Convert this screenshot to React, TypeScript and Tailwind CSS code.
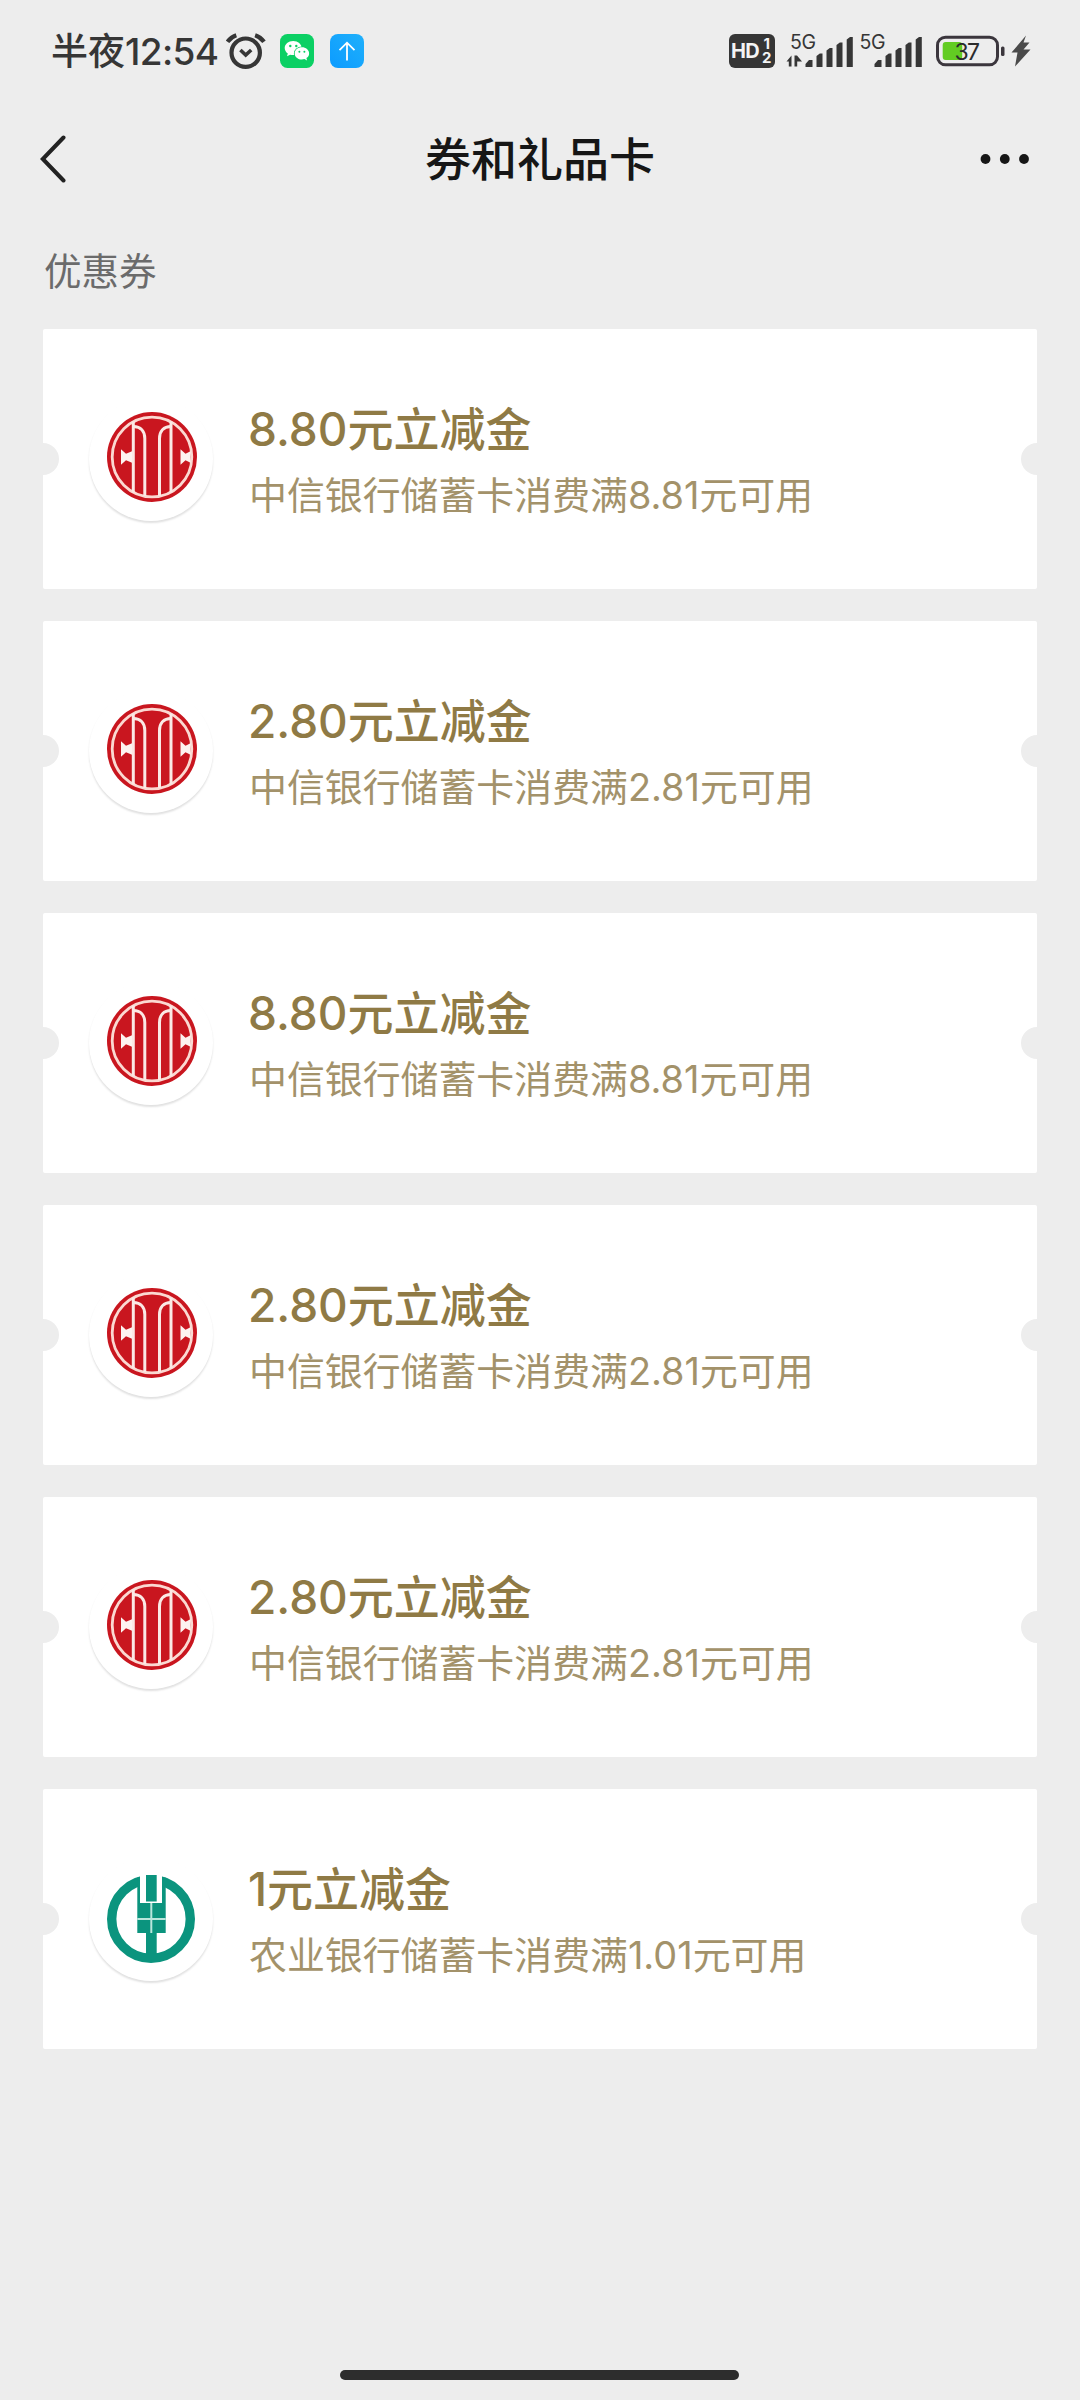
type Bank = "citic" | "abc";

interface Coupon {
  id: number;
  bank: Bank;
  amount: string;
  bankName: string;
  threshold: string;
}

const coupons: Coupon[] = [
  { id: 1, bank: "citic", amount: "8.80", bankName: "中信银行", threshold: "8.81" },
  { id: 2, bank: "citic", amount: "2.80", bankName: "中信银行", threshold: "2.81" },
  { id: 3, bank: "citic", amount: "8.80", bankName: "中信银行", threshold: "8.81" },
  { id: 4, bank: "citic", amount: "2.80", bankName: "中信银行", threshold: "2.81" },
  { id: 5, bank: "citic", amount: "2.80", bankName: "中信银行", threshold: "2.81" },
  { id: 6, bank: "abc", amount: "1", bankName: "农业银行", threshold: "1.01" },
];

function AlarmIcon() {
  return (
    <svg width="40" height="36" viewBox="0 0 40 36" fill="none" stroke="#363636" strokeWidth="4.2">
      <circle cx="19.7" cy="19.7" r="14.2" />
      <path d="M1.5 8.8Q4.8 4 10.3 2.2M29.1 2.2Q34.6 4 38 8.8" />
      <path d="M14.4 17l5.3 5 5.5-5" strokeWidth="3.6" />
    </svg>
  );
}

function WeChatIcon() {
  return (
    <svg width="34" height="34" viewBox="0 0 34 34">
      <rect width="34" height="34" rx="7.5" fill="#0bd064" />
      <path
        d="M13.2 7C8.4 7 4.7 10.2 4.7 14.1c0 2.2 1.2 4.2 3.1 5.5l-.8 2.7 3.1-1.6c1 .3 2 .4 3.1.4 4.7 0 8.5-3.1 8.5-7S17.9 7 13.2 7z"
        fill="#fff"
      />
      <ellipse cx="21.9" cy="19.4" rx="8" ry="6.9" fill="#0bd064" />
      <path
        d="M21.9 13.3c-4 0-7.2 2.7-7.2 6.1s3.2 6.1 7.2 6.1c.9 0 1.7-.1 2.5-.4l2.7 1.4-.7-2.4c1.7-1.1 2.7-2.8 2.7-4.7 0-3.4-3.2-6.1-7.2-6.1z"
        fill="#fff"
      />
      <g fill="#0bd064">
        <circle cx="10.3" cy="12" r="1.2" />
        <circle cx="16.3" cy="12" r="1.2" />
        <circle cx="19.4" cy="17.7" r="1" />
        <circle cx="24.4" cy="17.7" r="1" />
      </g>
    </svg>
  );
}

function UploadIcon() {
  return (
    <svg width="34" height="34" viewBox="0 0 34 34" fill="none">
      <defs>
        <linearGradient id="upload" x1="0" y1="1" x2="1" y2="0">
          <stop offset="0" stopColor="#0c9bff" />
          <stop offset="1" stopColor="#1fb0fb" />
        </linearGradient>
      </defs>
      <rect width="34" height="34" rx="8" fill="url(#upload)" />
      <path d="M17 26.5V9M9.5 16.2L17 8.7l7.5 7.5" stroke="#fff" strokeWidth="1.8" />
    </svg>
  );
}

function SignalIcon({ data = false }: { data?: boolean }) {
  return (
    <svg className="overflow-visible" width="67" height="34" viewBox="0 0 67 34" fill="#363636">
      <text x={data ? 4 : 4.5} y="15" fontSize="19.5" fontFamily="Inter, sans-serif" textLength="26">
        5G
      </text>
      {data && <path d="M0.5 27.5L5.5 21.5v11H2.8v-5zM8.500 21.500h2.500l5 6h-3v0h-1.800v5H8.500z" />}
      <path d="M19.5 33v-3l3.5-4h3.5v7zM30.5 33V22l3.3-2.5h2.700V33zM40.5 33V16.500l3.300-2.500h2.700v19zM50.500 33V11l3.300-2.500h2.700V33zM60.700 33V5.500L64 3h2.800v30z" />
    </svg>
  );
}

function StatusBar() {
  return (
    <header className="flex h-[104px] items-center justify-between pr-12 pl-[51px]">
      <div className="flex items-center">
        <span className="w-[173px] text-[37px] leading-[50px] font-medium whitespace-nowrap text-[#363636]">
          半夜<span className="tracking-[-0.6px]">12:54</span>
        </span>
        <div className="flex pb-[3px] pl-[2px]">
          <AlarmIcon />
        </div>
        <div className="flex gap-4 pb-[2px] pl-[14px]">
          <WeChatIcon />
          <UploadIcon />
        </div>
      </div>
      <div className="flex items-center pb-[2px]">
        <div className="flex h-[34px] w-[46px] items-center rounded-md bg-[#363636] pl-[2px] font-bold text-[#f4f4f4]">
          <span className="w-[31px] text-[20px] leading-none tracking-[-0.8px]">HD</span>
          <span className="flex flex-col items-center text-[15px] leading-[14px]">
            <span>1</span>
            <span>2</span>
          </span>
        </div>
        <div className="flex gap-[2px] pl-[11px]">
          <SignalIcon data />
          <SignalIcon />
        </div>
        <svg className="ml-[14px]" width="96" height="34" viewBox="0 0 96 34">
          <rect x="1.5" y="3.2" width="60" height="27.6" rx="8" fill="none" stroke="#3b363d" strokeWidth="3" />
          <rect x="6.7" y="8" width="19.5" height="18" rx="3" fill="#62cc22" />
          <rect x="65" y="12.5" width="3.5" height="9.5" rx="1.5" fill="#3b363d" />
          <text x="18.5" y="25.5" fontSize="23" fontFamily="Inter, sans-serif" fill="#2b2b2b" textLength="25.5">
            37
          </text>
          <path d="M90 1.5L75.5 18.5h6L79 32.5 94.500 15.500h-7l6-7h-6z" fill="#4a4a4a" />
        </svg>
      </div>
    </header>
  );
}

function NavBar() {
  return (
    <nav className="flex h-[110px] items-center justify-between pr-[51px] pl-[39px]">
      <svg width="62" height="48" viewBox="0 0 62 48" fill="none" stroke="#222" strokeWidth="4">
        <path d="M24.5 2.5L3.8 24l20.700 21.500" strokeLinecap="round" />
      </svg>
      <h1 className="text-[46px] leading-none font-medium text-[#161616]">券和礼品卡</h1>
      <svg width="50" height="12" viewBox="0 0 50 12" fill="#161616">
        <circle cx="6.5" cy="6" r="4.9" />
        <circle cx="25.8" cy="6" r="4.9" />
        <circle cx="45" cy="6" r="4.9" />
      </svg>
    </nav>
  );
}

function CiticLogo() {
  return (
    <svg width="90" height="90" viewBox="0 0 90 90" fill="none">
      <circle cx="45" cy="45" r="45" fill="#c9161f" />
      <circle cx="45" cy="45" r="39.8" stroke="#fbd9d2" strokeWidth="2.8" />
      <g stroke="#fbe9e5" strokeWidth="3">
        <path d="M26.3 9.5v71M64 9.5v71" />
        <path d="M26.5 14.5c7 0 11.3 4.5 11.3 12V84M63.8 14.5c-7 0-11.3 4.5-11.3 12V84" />
      </g>
      <path
        d="M14 37.3l5 4.5 6-2.5v11.4l-6-2.5-5 4.5zM73.500 37.300l5 4.500 5-2.500v11.400l-5-2.500-5 4.500z"
        fill="#fdf3f0"
      />
    </svg>
  );
}

function AbcLogo() {
  return (
    <svg width="88" height="88" viewBox="0 0 88 88" fill="none">
      <circle cx="44" cy="44" r="39.3" stroke="#0b947e" strokeWidth="9.4" />
      <path d="M33 0h22v28H33z" fill="#fff" />
      <path d="M30.3 2.5H33V28h22V2.5h3.7V58h-9v24H39V58h-8.7z" fill="#0b947e" />
      <path d="M39 0h10.7v26.5H39z" fill="#0b947e" />
      <path d="M44.3 28v30M30.3 44h28.4" stroke="#b9e6dc" strokeWidth="2" />
    </svg>
  );
}

function CouponCard({ coupon }: { coupon: Coupon }) {
  const isCitic = coupon.bank === "citic";

  return (
    <li className="relative flex h-[260px] items-center overflow-hidden rounded-[2px] bg-white pl-[46px]">
      {/* Ticket notches */}
      <span className="absolute top-[114px] -left-4 size-8 rounded-full bg-[#ededed]" />
      <span className="absolute top-[114px] -right-4 size-8 rounded-full bg-[#ededed]" />

      <div className="flex size-[124px] items-center justify-center rounded-full bg-white shadow-[0_2px_2px_rgba(0,0,0,0.12)]">
        {isCitic ? (
          <div className="pb-[5px] pl-[1px]">
            <CiticLogo />
          </div>
        ) : (
          <AbcLogo />
        )}
      </div>

      <div className="pt-[7px] pl-[35px] whitespace-nowrap">
        <h2 className="text-[46px] leading-[66px] font-medium text-[#8f7a45]">{coupon.amount}元立减金</h2>
        <p className="pl-[1px] text-[37.9px] leading-[67px] text-[#a3926a]">
          {coupon.bankName}储蓄卡消费满{coupon.threshold}元可用
        </p>
      </div>
    </li>
  );
}

export default function App() {
  return (
    <div className="flex h-[2400px] w-[1080px] flex-col bg-[#ededed] font-['Inter','Noto_Sans_CJK_SC',sans-serif]">
      <StatusBar />
      <NavBar />
      <main className="flex-1 px-[43px]">
        <div className="flex h-[115px] items-center pl-[1px] text-[37.5px] leading-none text-[#6b6b6b]">优惠券</div>
        <ul className="flex flex-col gap-8">
          {coupons.map((coupon) => (
            <CouponCard key={coupon.id} coupon={coupon} />
          ))}
        </ul>
      </main>
      <footer className="flex justify-center pr-[2px] pb-5">
        <div className="h-[10px] w-[399px] rounded-full bg-[#2d2d2d]" />
      </footer>
    </div>
  );
}
